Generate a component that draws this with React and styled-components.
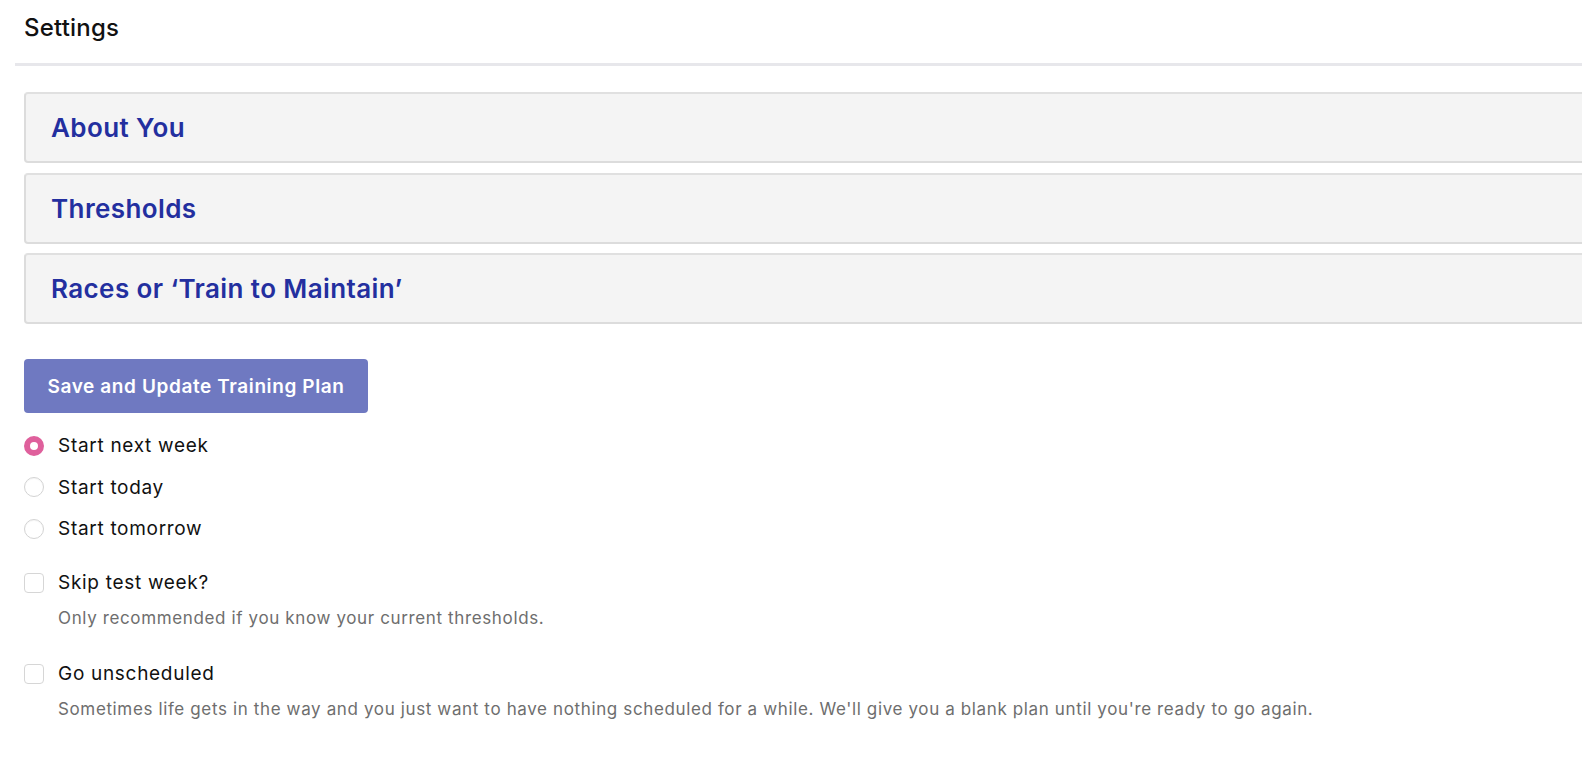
import React, { useState } from 'react'
import styled, { createGlobalStyle } from 'styled-components'

const GlobalStyle = createGlobalStyle`
  html, body {
    margin: 0;
    padding: 0;
    background: #ffffff;
    overflow: hidden;
  }
  body {
    font-family: Inter, "Noto Sans", "Liberation Sans", sans-serif;
    color: #111111;
  }
`

const sections = ['About You', 'Thresholds', 'Races or \u2018Train to Maintain\u2019']

const starts = [
  { id: 'next', label: 'Start next week' },
  { id: 'today', label: 'Start today' },
  { id: 'tomorrow', label: 'Start tomorrow' },
]

const options = [
  {
    id: 'skip',
    label: 'Skip test week?',
    help: 'Only recommended if you know your current thresholds.',
  },
  {
    id: 'unscheduled',
    label: 'Go unscheduled',
    help: "Sometimes life gets in the way and you just want to have nothing scheduled for a while. We'll give you a blank plan until you're ready to go again.",
  },
]

function App() {
  const [start, setStart] = useState('next')
  const [checked, setChecked] = useState({})

  return (
    <Page>
      <GlobalStyle />
      <Header>
        <Title>Settings</Title>
      </Header>
      <Content>
        <Panels>
          {sections.map((s) => (
            <Panel key={s}>
              <PanelTitle>{s}</PanelTitle>
            </Panel>
          ))}
        </Panels>

        <SaveBtn>Save and Update Training Plan</SaveBtn>

        <RadioList>
          {starts.map((o) => (
            <RadioRow key={o.id} onClick={() => setStart(o.id)}>
              <Radio $on={start === o.id} />
              <Label>{o.label}</Label>
            </RadioRow>
          ))}
        </RadioList>

        <CheckList>
          {options.map((o) => (
            <CheckItem key={o.id}>
              <CheckRow
                onClick={() => setChecked({ ...checked, [o.id]: !checked[o.id] })}
              >
                <Box $on={checked[o.id]} />
                <Label>{o.label}</Label>
              </CheckRow>
              <Help>{o.help}</Help>
            </CheckItem>
          ))}
        </CheckList>
      </Content>
    </Page>
  )
}

export default App

const Page = styled.div`
  width: 1640px;
`
const Header = styled.div`
  margin-left: 15px;
  padding: 0 0 0 9px;
  height: 63px;
  display: flex;
  align-items: center;
  border-bottom: 3px solid #e7e7eb;
`
const Title = styled.h1`
  margin: 0 0 8px 0;
  font-size: 24px;
  font-weight: 500;
  letter-spacing: 0.2px;
  color: #111;
`
const Content = styled.div`
  padding: 26px 0 0 24px;
`
const Panels = styled.div`
  display: flex;
  flex-direction: column;
  gap: 9.5px;
`
const Panel = styled.div`
  height: 67px;
  box-sizing: content-box;
  border: 2px solid #dcdcdc;
  border-top-color: #e0e0e0;
  border-radius: 4px;
  background: #f4f4f4;
  display: flex;
  align-items: center;
  padding: 0 25px;
  cursor: pointer;
`
const PanelTitle = styled.h2`
  margin: 0;
  font-size: 26px;
  font-weight: 600;
  letter-spacing: 0.4px;
  color: #232f9f;
`
const SaveBtn = styled.button`
  margin-top: 35px;
  width: 344px;
  height: 54px;
  border: none;
  border-radius: 4px;
  background: #6f79c1;
  color: #fff;
  font-family: inherit;
  font-size: 19px;
  font-weight: 600;
  letter-spacing: 0.6px;
  cursor: pointer;
`
const RadioList = styled.div`
  margin-top: 12px;
  display: flex;
  flex-direction: column;
`
const RadioRow = styled.label`
  height: 41.5px;
  display: flex;
  align-items: center;
  gap: 14px;
  cursor: pointer;
`
const Radio = styled.span`
  width: 20px;
  height: 20px;
  box-sizing: border-box;
  border-radius: 50%;
  flex-shrink: 0;
  background: #fff;
  border: ${(p) => (p.$on ? '6px solid #df609c' : '1px solid #d3d3d3')};
  box-shadow: ${(p) => (p.$on ? 'none' : 'inset 0 1px 1px rgba(0,0,0,0.04)')};
`
const Label = styled.span`
  font-size: 19px;
  letter-spacing: 0.7px;
  color: #111;
`
const CheckList = styled.div`
  margin-top: 18px;
  display: flex;
  flex-direction: column;
  gap: 31px;
`
const CheckItem = styled.div`
  display: flex;
  flex-direction: column;
`
const CheckRow = styled.label`
  height: 30px;
  display: flex;
  align-items: center;
  gap: 14px;
  cursor: pointer;
`
const Box = styled.span`
  width: 20px;
  height: 20px;
  box-sizing: border-box;
  flex-shrink: 0;
  border-radius: 4px;
  border: 1px solid #d6d6d6;
  background: ${(p) => (p.$on ? '#df609c' : '#fff')};
`
const Help = styled.p`
  margin: 10px 0 0 34px;
  font-size: 17px;
  line-height: 20px;
  letter-spacing: 0.63px;
  color: #6e6e6e;
`
